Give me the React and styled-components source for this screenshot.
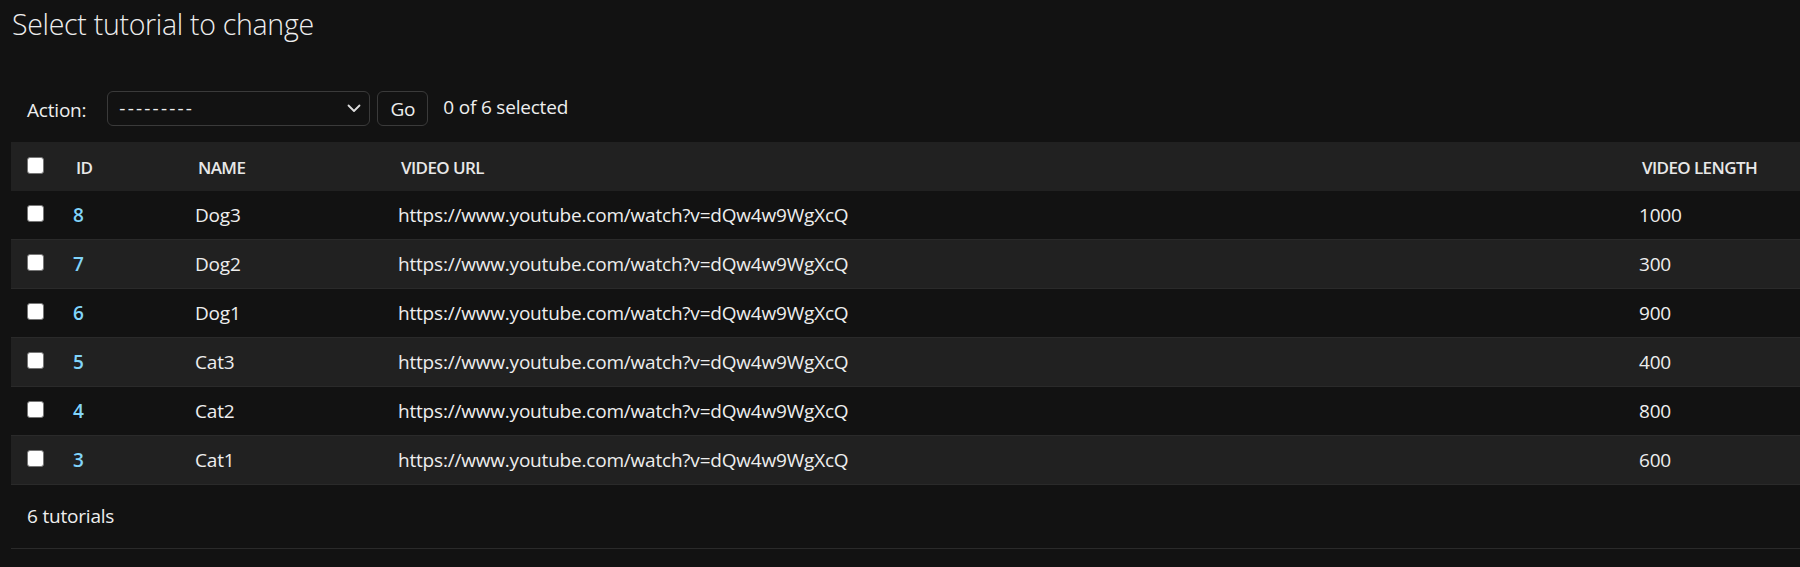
import React from "react";
import styled, { createGlobalStyle } from "styled-components";

const GlobalStyle = createGlobalStyle`
  html, body {
    margin: 0;
    padding: 0;
    background: #121212;
  }
  body {
    font-family: "Open Sans", "Noto Sans", sans-serif;
    color: #eeeeee;
    letter-spacing: -0.2px;
  }
`;

const Page = styled.div`
  box-sizing: border-box;
  width: 1800px;
  height: 567px;
  overflow: hidden;
  padding-left: 11px;
`;

const Title = styled.h1`
  margin: 0;
  padding: 4px 0 0 1px;
  font-size: 28.5px;
  font-weight: 300;
  line-height: 40px;
  letter-spacing: -0.3px;
  color: #eeeeee;
`;

const ActionBar = styled.div`
  display: flex;
  align-items: center;
  height: 35px;
  margin-top: 47px;
  padding-left: 16px;
  font-size: 19px;
`;

const ActionLabel = styled.label`
  margin-right: 21px;
  padding-top: 3px;
`;

const SelectBox = styled.div`
  box-sizing: border-box;
  display: flex;
  align-items: center;
  justify-content: space-between;
  width: 263px;
  height: 35px;
  padding: 0 8px 0 11px;
  border: 1px solid #3a3a3a;
  border-radius: 6px;
  background: #121212;
`;

const Dashes = styled.span`
  letter-spacing: 2.2px;
  padding-bottom: 2px;
`;

const GoButton = styled.button`
  box-sizing: border-box;
  width: 51px;
  height: 35px;
  margin-left: 7px;
  padding: 0;
  border: 1px solid #3a3a3a;
  border-radius: 6px;
  background: #121212;
  color: #eeeeee;
  font-family: inherit;
  font-size: 19px;
  letter-spacing: -0.2px;
`;

const Counter = styled.span`
  margin-left: 15px;
  margin-bottom: 3px;
`;

const Table = styled.div`
  margin-top: 16px;
  width: 1789px;
`;

const Row = styled.div`
  display: grid;
  grid-template-columns: 50px 122px 203px 1241px 1fr;
  align-items: center;
  height: ${(p) => (p.$head ? "49px" : "48px")};
  border-bottom: ${(p) => (p.$head ? "none" : "1px solid #2a2a2a")};
  background: ${(p) => (p.$shade ? "#212121" : "#121212")};
`;

const Cell = styled.div`
  padding-left: 12px;
  font-size: 19px;
  color: #eeeeee;
  white-space: nowrap;
`;

const HeadCell = styled.div`
  padding: 2px 0 0 15px;
  font-size: 17px;
  font-weight: 600;
  letter-spacing: -0.6px;
  text-transform: uppercase;
  color: #e8e8e8;
  white-space: nowrap;
`;

const IdLink = styled(Cell)`
  color: #81d4fa;
  font-weight: 600;
`;

const CheckCell = styled.div`
  padding-left: 16px;
  display: flex;
  margin-bottom: 3px;
`;

const Checkbox = styled.span`
  box-sizing: border-box;
  width: 17px;
  height: 17px;
  border: 1.5px solid #767676;
  border-radius: 3px;
  background: #ffffff;
`;

const Footer = styled.div`
  width: 1789px;
  padding: 18px 0 18px 16px;
  box-sizing: border-box;
  height: 64px;
  line-height: 27px;
  font-size: 19px;
  border-bottom: 1px solid #2a2a2a;
`;

const Chevron = () => (
  <svg width="14" height="9" viewBox="0 0 14 9">
    <polyline
      points="1.5,1.5 7,7 12.5,1.5"
      fill="none"
      stroke="#dddddd"
      strokeWidth="1.8"
      strokeLinecap="round"
      strokeLinejoin="round"
    />
  </svg>
);

const URL = "https://www.youtube.com/watch?v=dQw4w9WgXcQ";

const tutorials = [
  { id: 8, name: "Dog3", length: 1000 },
  { id: 7, name: "Dog2", length: 300 },
  { id: 6, name: "Dog1", length: 900 },
  { id: 5, name: "Cat3", length: 400 },
  { id: 4, name: "Cat2", length: 800 },
  { id: 3, name: "Cat1", length: 600 },
];

export default function App() {
  return (
    <>
      <GlobalStyle />
      <Page>
        <Title>Select tutorial to change</Title>
        <ActionBar>
          <ActionLabel>Action:</ActionLabel>
          <SelectBox>
            <Dashes>---------</Dashes>
            <Chevron />
          </SelectBox>
          <GoButton>Go</GoButton>
          <Counter>0 of 6 selected</Counter>
        </ActionBar>
        <Table>
          <Row $head $shade>
            <CheckCell>
              <Checkbox />
            </CheckCell>
            <HeadCell>ID</HeadCell>
            <HeadCell>Name</HeadCell>
            <HeadCell>Video URL</HeadCell>
            <HeadCell>Video length</HeadCell>
          </Row>
          {tutorials.map((t, i) => (
            <Row key={t.id} $shade={i % 2 === 1}>
              <CheckCell>
                <Checkbox />
              </CheckCell>
              <IdLink>{t.id}</IdLink>
              <Cell>{t.name}</Cell>
              <Cell>{URL}</Cell>
              <Cell>{t.length}</Cell>
            </Row>
          ))}
        </Table>
        <Footer>6 tutorials</Footer>
      </Page>
    </>
  );
}
